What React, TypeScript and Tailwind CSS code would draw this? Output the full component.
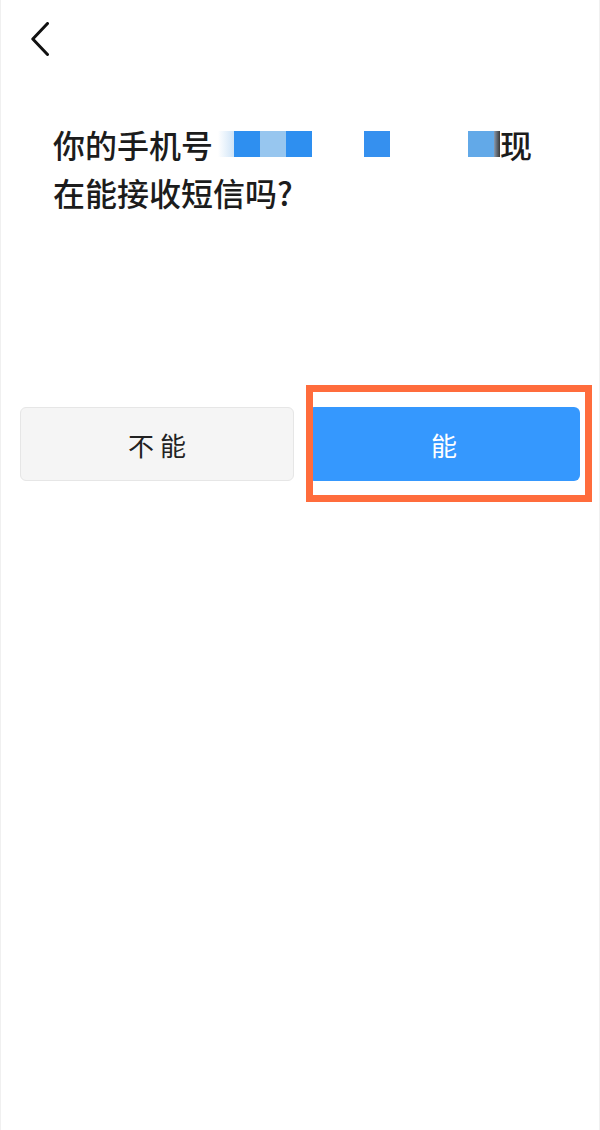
import React from 'react';

const FONT = '"Noto Sans CJK SC", "Noto Sans", sans-serif';

function PhoneMosaic() {
  // blurred phone number, drawn as coloured cells
  return (
    <div className="flex h-[26px] w-[287px] shrink-0">
      <div className="w-[5px]" />
      <div className="w-[16px] bg-gradient-to-r from-white to-[#cfe4f7]" />
      <div className="w-[26px] bg-[#2e8ff0]" />
      <div className="w-[26px] bg-[#97c6ef]" />
      <div className="w-[26px] bg-[#2e8ff0]" />
      <div className="w-[52px]" />
      <div className="w-[26px] bg-[#3590ef]" />
      <div className="w-[78px]" />
      <div className="w-[26px] bg-[#62a9e8]" />
      <div className="w-[6px] bg-gradient-to-r from-[#8a9bb0] to-[#3a3a3a]" />
    </div>
  );
}

export default function App() {
  return (
    <div
      className="relative h-[1130px] w-full border-x border-[#f0f0f0] bg-white"
      style={{ fontFamily: FONT }}
    >
      {/* Back */}
      <div className="pl-[30px] pt-[22px]">
        <svg width="18" height="34" viewBox="0 0 18 34" fill="none">
          <path
            d="M16.5 1.5 L1.8 17 L16.5 32.5"
            stroke="#111111"
            strokeWidth="3"
            strokeLinecap="round"
            strokeLinejoin="round"
          />
        </svg>
      </div>

      {/* Title */}
      <div className="mt-[64px] pl-[52px] text-[32px] font-medium leading-[48px] text-[#1c1c1c]">
        <div className="flex h-[48px] items-center">
          <span>你的手机号</span>
          <PhoneMosaic />
          <span>现</span>
        </div>
        <div className="h-[48px]">在能接收短信吗?</div>
      </div>

      {/* Buttons */}
      <div className="mt-[191px] flex gap-[14px] px-[19px]">
        <button className="flex h-[74px] flex-1 items-center justify-center rounded-[6px] border border-[#e6e6e6] bg-[#f5f5f5] text-[26px] text-[#222222]">
          不 能
        </button>
        <button className="flex h-[74px] flex-1 items-center justify-center rounded-[6px] bg-[#3598fe] text-[26px] text-white">
          能
        </button>
      </div>

      {/* Highlight annotation */}
      <div className="pointer-events-none absolute left-[305px] top-[385px] h-[117px] w-[286px] border-[7px] border-[#ff6c3c]" />
    </div>
  );
}
